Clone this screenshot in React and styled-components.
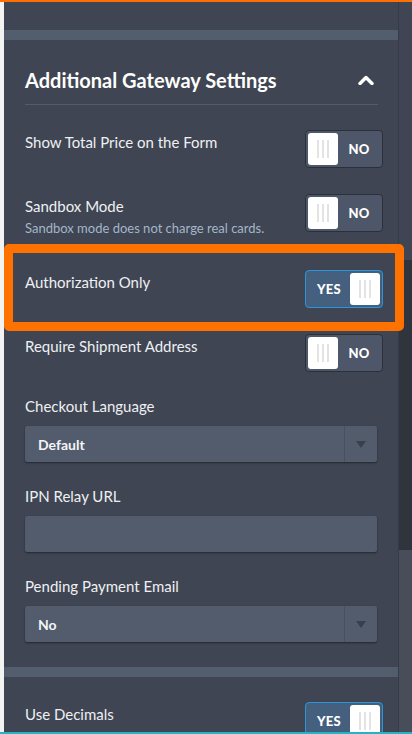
import React from 'react';
import styled, { createGlobalStyle } from 'styled-components';

const GlobalStyle = createGlobalStyle`
  html, body {
    margin: 0;
    padding: 0;
    background: #f3f3f3;
  }
  * {
    box-sizing: border-box;
  }
`;

const Page = styled.div`
  display: flex;
  height: 734px;
  padding-left: 4px;
  overflow: hidden;
  border-top: 2px solid #ff7000;
  border-bottom: 2px solid #22b5c8;
  font-family: Lato, 'Liberation Sans', sans-serif;
  color: #f1f3f5;
`;

const Panel = styled.div`
  position: relative;
  flex: 1;
  background: #3f4552;
  padding-top: 28px;
`;

const Band = styled.div`
  height: 10px;
  background: #525d6d;
`;

const Section = styled.div`
  padding: 0 15px ${(p) => p.$bottom || 0}px 21px;
`;

const Header = styled.div`
  display: flex;
  align-items: center;
  justify-content: space-between;
  margin-right: 5px;
  padding: 27px 0 11px;
  border-bottom: 1px solid #525c6b;
`;

const Title = styled.h2`
  margin: 0;
  font-size: 20px;
  line-height: 26px;
  font-weight: 700;
  color: #ffffff;
`;

const Chevron = styled.svg`
  width: 16px;
  height: 10px;
  margin-right: 4px;
`;

const Row = styled.div`
  position: relative;
  display: flex;
  align-items: flex-start;
  justify-content: space-between;
  padding: ${(p) => (p.$first ? '25px' : '13px')} 0 13px;
`;

const LabelCol = styled.div`
  display: flex;
  flex-direction: column;
`;

const Label = styled.div`
  font-size: 15px;
  line-height: 24px;
  color: #eef0f3;
`;

const Hint = styled.div`
  margin: 2px 0 8px;
  font-size: 13px;
  line-height: 16px;
  color: #a3b6ca;
`;

const Highlight = styled.div`
  position: absolute;
  z-index: 2;
  top: -13px;
  bottom: -10px;
  left: -21px;
  right: -21px;
  border: 9px solid #ff7200;
  border-radius: 5px;
  pointer-events: none;
`;

const Toggle = styled.div`
  display: flex;
  flex-direction: ${(p) => (p.$on ? 'row-reverse' : 'row')};
  align-items: center;
  width: 78px;
  height: 38px;
  padding: 2px;
  border: 1px solid ${(p) => (p.$on ? '#2b95da' : '#2c3139')};
  border-radius: 4px;
  background: ${(p) => (p.$on ? '#44607e' : '#4e5769')};
`;

const Knob = styled.div`
  display: flex;
  align-items: center;
  justify-content: center;
  gap: 3px;
  width: 30px;
  height: 32px;
  border-radius: 3px;
  background: #ffffff;

  span {
    width: 2px;
    height: 18px;
    background: #e3e3e3;
  }
`;

const ToggleText = styled.div`
  flex: 1;
  text-align: center;
  font-size: 13px;
  font-weight: 900;
  color: #ffffff;
  letter-spacing: 0.3px;
`;

const FieldGroup = styled.div`
  margin-right: 6px;
  padding: 9px 0 13px;
`;

const FieldLabel = styled(Label)`
  margin-bottom: 8px;
`;

const Select = styled.div`
  display: flex;
  align-items: stretch;
  height: 36px;
  border-radius: 2px;
  background: #525c6d;
  box-shadow: 0 1px 2px rgba(0, 0, 0, 0.45);
`;

const SelectValue = styled.div`
  flex: 1;
  display: flex;
  align-items: center;
  padding-left: 13px;
  font-size: 14px;
  font-weight: 700;
  color: #f4f5f7;
`;

const Caret = styled.div`
  display: flex;
  align-items: center;
  justify-content: center;
  width: 33px;
  border-left: 1px solid #465061;

  &::after {
    content: '';
    border-left: 5px solid transparent;
    border-right: 5px solid transparent;
    border-top: 7px solid #39404c;
  }
`;

const Input = styled.div`
  height: 36px;
  border-radius: 2px;
  background: #525c6d;
  box-shadow: 0 1px 2px rgba(0, 0, 0, 0.45);
`;

const Scrollbar = styled.div`
  display: flex;
  flex-direction: column;
  width: 14px;
  border-left: 1px solid #363b45;
  background: #3f4552;
`;

const ScrollGap = styled.div`
  height: 258px;
`;

const Thumb = styled.div`
  height: 290px;
  background: #30343c;
`;

const ScrollRest = styled.div`
  flex: 1;
  background: #474d59;
`;

const Switch = ({ on }) => (
  <Toggle $on={on}>
    <Knob>
      <span />
      <span />
      <span />
    </Knob>
    <ToggleText>{on ? 'YES' : 'NO'}</ToggleText>
  </Toggle>
);

const Dropdown = ({ value }) => (
  <Select>
    <SelectValue>{value}</SelectValue>
    <Caret />
  </Select>
);

export default function App() {
  return (
    <>
      <GlobalStyle />
      <Page>
        <Panel>
          <Band />
          <Section $bottom={12}>
            <Header>
              <Title>Additional Gateway Settings</Title>
              <Chevron viewBox="0 0 16 10">
                <polyline
                  points="2,8.5 8,2.5 14,8.5"
                  fill="none"
                  stroke="#ffffff"
                  strokeWidth="3.4"
                  strokeLinecap="round"
                  strokeLinejoin="round"
                />
              </Chevron>
            </Header>

            <Row $first>
              <Label>Show Total Price on the Form</Label>
              <Switch />
            </Row>

            <Row>
              <LabelCol>
                <Label>Sandbox Mode</Label>
                <Hint>Sandbox mode does not charge real cards.</Hint>
              </LabelCol>
              <Switch />
            </Row>

            <Row>
              <Highlight />
              <Label>Authorization Only</Label>
              <Switch on />
            </Row>

            <Row>
              <Label>Require Shipment Address</Label>
              <Switch />
            </Row>

            <FieldGroup>
              <FieldLabel>Checkout Language</FieldLabel>
              <Dropdown value="Default" />
            </FieldGroup>

            <FieldGroup>
              <FieldLabel>IPN Relay URL</FieldLabel>
              <Input />
            </FieldGroup>

            <FieldGroup>
              <FieldLabel>Pending Payment Email</FieldLabel>
              <Dropdown value="No" />
            </FieldGroup>
          </Section>

          <Band />
          <Section>
            <Row $first>
              <Label>Use Decimals</Label>
              <Switch on />
            </Row>
          </Section>
        </Panel>
        <Scrollbar>
          <ScrollGap />
          <Thumb />
          <ScrollRest />
        </Scrollbar>
      </Page>
    </>
  );
}
